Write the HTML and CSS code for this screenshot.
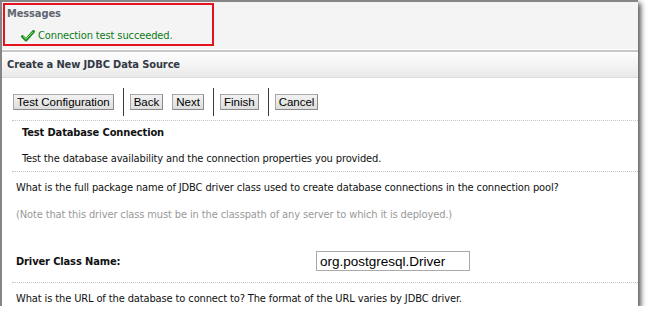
FILE: index.html
```html
<!DOCTYPE html>
<html>
<head>
    <meta charset="UTF-8">
    <title>Create a New JDBC Data Source</title>
    <link rel="stylesheet" href="styles.css">
</head>
<body>
    <div class="frame">
        <div class="messages">
            <div class="msgBox">
                <div class="msgTitle">Messages</div>
                <div class="msgLine">
                    <svg class="check" width="14" height="12" viewBox="0 0 14 12">
                        <path d="M1.5 6.5 L5 10 L12.5 1.5" fill="none" stroke="#1d8a1d" stroke-width="3" stroke-linecap="round" stroke-linejoin="round"/>
                        <path d="M2 6.3 L5 9.2 L12 1.8" fill="none" stroke="#86e486" stroke-width="1"/>
                    </svg>
                    <span>Connection test succeeded.</span>
                </div>
            </div>
        </div>
        <div class="sep"></div>
        <div class="header">Create a New JDBC Data Source</div>
        <div class="content">
            <div class="toolbar">
                <button class="btn">Test Configuration</button>
                <span class="bar"></span>
                <button class="btn">Back</button>
                <button class="btn">Next</button>
                <span class="bar"></span>
                <button class="btn">Finish</button>
                <span class="bar"></span>
                <button class="btn">Cancel</button>
            </div>
            <div class="section">
                <div class="secTitle">Test Database Connection</div>
                <div class="secText">Test the database availability and the connection properties you provided.</div>
            </div>
            <div class="question">What is the full package name of JDBC driver class used to create database connections in the connection pool?</div>
            <div class="note">(Note that this driver class must be in the classpath of any server to which it is deployed.)</div>
            <div class="field">
                <label class="fieldLabel">Driver Class Name:</label>
                <input class="fieldInput" type="text" value="org.postgresql.Driver">
            </div>
            <div class="question last">What is the URL of the database to connect to? The format of the URL varies by JDBC driver.</div>
        </div>
    </div>
</body>
</html>
```

FILE: styles.css
```css
body {
    margin: 0;
    background-color: white;
    font-family: "DejaVu Sans Condensed", "DejaVu Sans", sans-serif;
    font-size: 11px;
    letter-spacing: -0.12px;
    color: #111111;
}
.frame {
    width: 636px;
    height: 304px;
    border-left: 2px solid #858585;
    border-top: 2px solid #858585;
    background-color: white;
    box-shadow: 3px 3px 5px rgba(0, 0, 0, 0.65);
    overflow: hidden;
}
.messages {
    background-color: #f4f4f4;
    height: 47px;
    padding: 1px 0 0 1px;
    box-sizing: border-box;
}
.msgBox {
    width: 211px;
    height: 43px;
    border: 2px solid #e3141f;
    box-sizing: border-box;
    padding: 2px 0 0 2px;
}
.msgTitle {
    font-weight: bold;
    color: #5f6670;
}
.msgLine {
    display: flex;
    align-items: center;
    gap: 3px;
    margin: 9px 0 0 14px;
    color: #0b7a16;
}
.sep {
    height: 2px;
    background-color: #c8c8c8;
    border-bottom: 1px solid white;
    margin-top: 1px;
}
.header {
    height: 24px;
    line-height: 24px;
    padding-left: 5px;
    font-weight: bold;
    color: #333a44;
    background: linear-gradient(#fdfdfd, #f4f4f4 50%, #e9eae8);
    border-bottom: 1px solid #dcdcdc;
}
.content {
    padding: 0 0 0 10px;
}
.toolbar {
    display: flex;
    align-items: center;
    height: 36px;
    margin-top: 6px;
    padding-left: 1px;
    border-bottom: 1px dotted #c4c4c4;
}
.btn {
    font-family: "Liberation Sans", Arial, sans-serif;
    font-size: 11.5px;
    letter-spacing: 0;
    color: black;
    background: linear-gradient(#f2f2f2, #dedede);
    border: 1px solid #a8a8a8;
    border-right-color: #8a8a8a;
    border-bottom-color: #8a8a8a;
    padding: 1px 3px 0;
    height: 16px;
    line-height: 13px;
    margin-right: 9px;
}
.bar {
    width: 1px;
    height: 28px;
    background-color: #3a3a3a;
    margin-right: 6px;
}
.section {
    padding: 5px 0 0 10px;
    height: 45px;
    border-bottom: 1px dotted #c4c4c4;
}
.secTitle {
    font-weight: bold;
}
.secText {
    margin-top: 13px;
}
.question {
    padding: 9px 0 0 4px;
}
.note {
    padding: 14px 0 0 4px;
    color: #999999;
}
.field {
    display: flex;
    align-items: center;
    margin-top: 19px;
    padding-left: 4px;
    height: 42px;
    border-bottom: 1px dotted #c4c4c4;
}
.fieldLabel {
    font-weight: bold;
    width: 300px;
}
.fieldInput {
    font-family: "Liberation Sans", Arial, sans-serif;
    font-size: 13.5px;
    letter-spacing: 0;
    width: 154px;
    height: 20px;
    box-sizing: border-box;
    border: 1px solid #a9a9a9;
    padding: 0 3px;
    color: black;
}
.question.last {
    padding-top: 9px;
}
```
